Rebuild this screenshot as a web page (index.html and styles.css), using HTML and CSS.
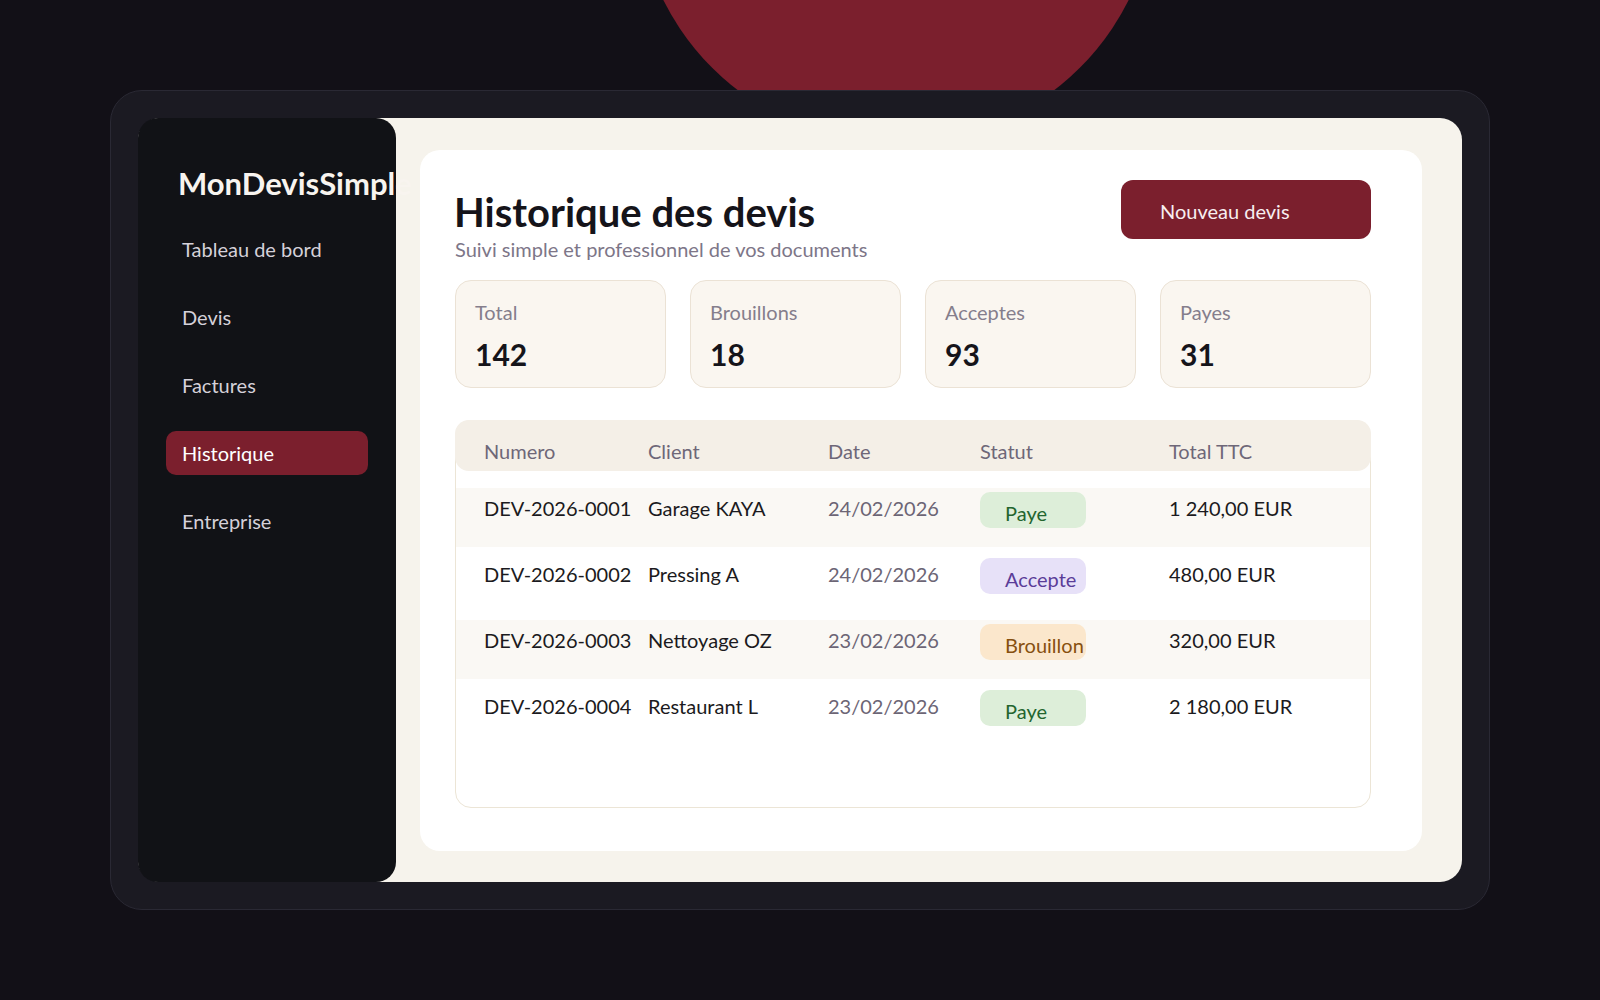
FILE: index.html
```html
<!DOCTYPE html>
<html>
<head>
  <meta charset="utf-8">
  <title>MonDevisSimple - Historique</title>
  <link rel="stylesheet" href="styles.css">
</head>
<body>
  <div class="blob"></div>

  <div class="frame">
    <div class="app">
      <aside class="sidebar">
        <div class="brand">MonDevisSimple</div>
        <nav class="nav">
          <a class="nav-item">Tableau de bord</a>
          <a class="nav-item">Devis</a>
          <a class="nav-item">Factures</a>
          <a class="nav-item active">Historique</a>
          <a class="nav-item">Entreprise</a>
        </nav>
      </aside>

      <main class="main">
        <section class="card">
          <div class="card-head">
            <div>
              <h1>Historique des devis</h1>
              <p class="subtitle">Suivi simple et professionnel de vos documents</p>
            </div>
            <button class="btn-new">Nouveau devis</button>
          </div>

          <div class="stats">
            <div class="stat">
              <div class="stat-label">Total</div>
              <div class="stat-value">142</div>
            </div>
            <div class="stat">
              <div class="stat-label">Brouillons</div>
              <div class="stat-value">18</div>
            </div>
            <div class="stat">
              <div class="stat-label">Acceptes</div>
              <div class="stat-value">93</div>
            </div>
            <div class="stat">
              <div class="stat-label">Payes</div>
              <div class="stat-value">31</div>
            </div>
          </div>

          <div class="table">
            <div class="row head">
              <div>Numero</div>
              <div>Client</div>
              <div>Date</div>
              <div>Statut</div>
              <div>Total TTC</div>
            </div>
            <div class="row odd">
              <div>DEV-2026-0001</div>
              <div>Garage KAYA</div>
              <div class="date">24/02/2026</div>
              <div><span class="pill paid">Paye</span></div>
              <div>1 240,00 EUR</div>
            </div>
            <div class="row">
              <div>DEV-2026-0002</div>
              <div>Pressing A</div>
              <div class="date">24/02/2026</div>
              <div><span class="pill accepted">Accepte</span></div>
              <div>480,00 EUR</div>
            </div>
            <div class="row odd">
              <div>DEV-2026-0003</div>
              <div>Nettoyage OZ</div>
              <div class="date">23/02/2026</div>
              <div><span class="pill draft">Brouillon</span></div>
              <div>320,00 EUR</div>
            </div>
            <div class="row">
              <div>DEV-2026-0004</div>
              <div>Restaurant L</div>
              <div class="date">23/02/2026</div>
              <div><span class="pill paid">Paye</span></div>
              <div>2 180,00 EUR</div>
            </div>
          </div>
        </section>
      </main>
    </div>
  </div>
</body>
</html>
```
FILE: styles.css
```css
html, body {
  margin: 0;
  height: 100%;
}

body {
  background: #121017;
  font-family: Lato, "Open Sans", sans-serif;
  color: #17161c;
  overflow: hidden;
}

/* decorative disc behind the frame */
.blob {
  position: absolute;
  left: 636px;
  top: -376px;
  width: 520px;
  height: 520px;
  border-radius: 50%;
  background: #7b1f2d;
}

.frame {
  position: relative;
  z-index: 1;
  box-sizing: border-box;
  width: 1380px;
  height: 820px;
  margin: 90px auto 0;
  padding: 27px;
  background: #1b1a22;
  border: 1px solid #2a2934;
  border-radius: 32px;
}

.app {
  display: flex;
  height: 100%;
  background: #f6f3ec;
  border-radius: 22px;
}

/* sidebar */
.sidebar {
  box-sizing: border-box;
  flex: 0 0 258px;
  width: 258px;
  min-width: 0;
  padding: 47px 28px 45px;
  background: #111216;
  border-radius: 20px;
}

.brand {
  padding-left: 12px;
  margin-bottom: 26px;
  font-size: 31px;
  line-height: 36px;
  font-weight: 700;
  color: #f8f4ef;
  white-space: nowrap;
}

.nav {
  display: flex;
  flex-direction: column;
  gap: 24px;
}

.nav-item {
  display: block;
  height: 44px;
  padding-left: 16px;
  font-size: 20px;
  line-height: 44px;
  color: #d5d1d9;
  border-radius: 10px;
}

.nav-item.active {
  background: #7b1f2d;
  color: #fff;
}

/* main */
.main {
  flex: 1;
  min-width: 0;
  display: flex;
  flex-direction: column;
  padding: 32px 40px 31px 24px;
}

.card {
  flex: 1;
  padding: 30px 51px 0 35px;
  background: #fff;
  border-radius: 20px;
}

.card-head {
  display: flex;
  justify-content: space-between;
  align-items: flex-start;
}

h1 {
  margin: 8px 0 0 -1px;
  font-size: 40px;
  line-height: 48px;
  font-weight: 700;
  color: #15141a;
}

.subtitle {
  margin: 1px 0 0;
  font-size: 20px;
  line-height: 24px;
  color: #7d7688;
}

.btn-new {
  box-sizing: border-box;
  width: 250px;
  height: 59px;
  padding: 4px 0 0 39px;
  border: 0;
  border-radius: 12px;
  background: #7b1f2d;
  color: #f7eef0;
  font-family: inherit;
  font-size: 20px;
  line-height: 55px;
  text-align: left;
}

/* stat cards */
.stats {
  display: grid;
  grid-template-columns: repeat(4, 1fr);
  gap: 24px;
  margin-top: 19px;
}

.stat {
  box-sizing: border-box;
  height: 108px;
  padding: 19px 19px 0;
  background: #faf6f0;
  border: 1px solid #ebe2d5;
  border-radius: 16px;
}

.stat-label {
  font-size: 20px;
  line-height: 24px;
  color: #857e8c;
}

.stat-value {
  margin-top: 12px;
  font-size: 30px;
  line-height: 36px;
  font-weight: 700;
  color: #15141a;
}

/* table */
.table {
  box-sizing: border-box;
  height: 388px;
  margin-top: 32px;
  background: #fff;
  border: 1px solid #ece5d6;
  border-radius: 16px;
}

.row {
  display: grid;
  grid-template-columns: 164px 180px 152px 189px 1fr;
  align-items: start;
  box-sizing: border-box;
  height: 59px;
  padding: 8px 0 0 28px;
  margin-top: 7px;
  font-size: 20px;
  line-height: 24px;
  color: #1b1a20;
}

.row.head {
  height: 51px;
  margin: -1px -1px 17px;
  padding: 19px 0 0 29px;
  background: #f4efe7;
  border-radius: 14px;
  color: #6e6778;
}

.row.head + .row {
  margin-top: 0;
}

.row.odd {
  background: #faf8f4;
}

.date {
  color: #6c6575;
}

.pill {
  display: block;
  box-sizing: border-box;
  width: 106px;
  height: 36px;
  margin-top: -4px;
  padding: 9px 0 0 25px;
  border-radius: 10px;
  white-space: nowrap;
}

.pill.paid {
  background: #ddeed9;
  color: #23652f;
}

.pill.accepted {
  background: #e7e1f8;
  color: #5a3c98;
}

.pill.draft {
  background: #fbe7cc;
  color: #87500f;
}
```
